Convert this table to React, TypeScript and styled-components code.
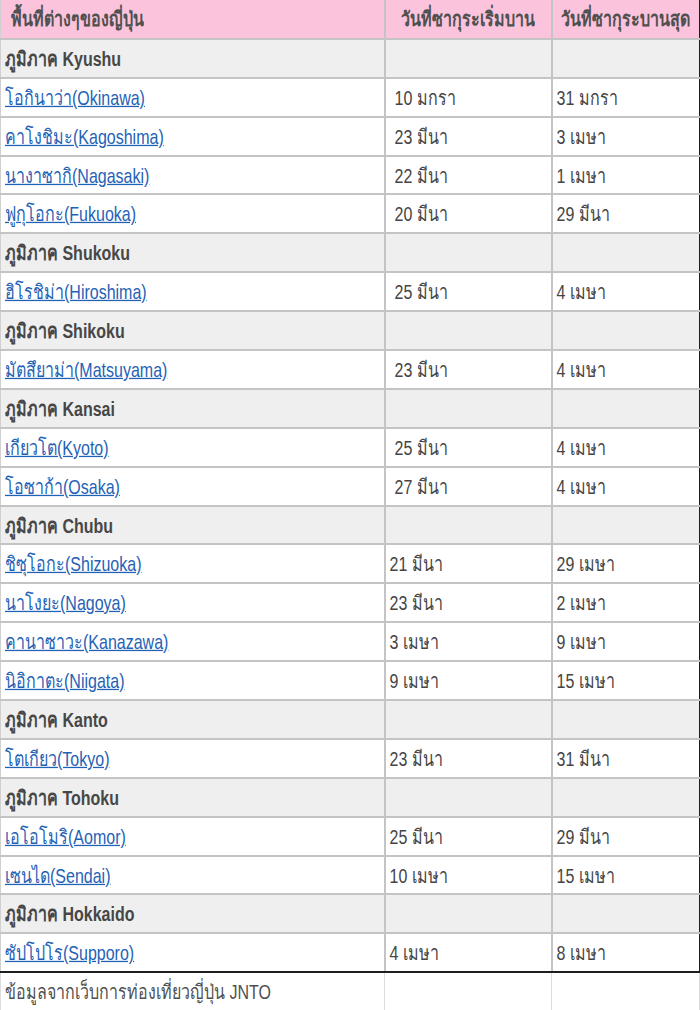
import React from "react";
import styled, { createGlobalStyle } from "styled-components";

type Place = { name: string; start: string; end: string; pad?: boolean };
type Region = { title: string; places: Place[] };

const regions: Region[] = [
  {
    title: "ภูมิภาค Kyushu",
    places: [
      { name: "โอกินาว่า(Okinawa)", start: "10 มกรา", end: "31 มกรา", pad: true },
      { name: "คาโงชิมะ(Kagoshima)", start: "23 มีนา", end: "3 เมษา", pad: true },
      { name: "นางาซากิ(Nagasaki)", start: "22 มีนา", end: "1 เมษา", pad: true },
      { name: "ฟูกุโอกะ(Fukuoka)", start: "20 มีนา", end: "29 มีนา", pad: true },
    ],
  },
  {
    title: "ภูมิภาค Shukoku",
    places: [{ name: "ฮิโรชิม่า(Hiroshima)", start: "25 มีนา", end: "4 เมษา", pad: true }],
  },
  {
    title: "ภูมิภาค Shikoku",
    places: [{ name: "มัตสึยาม่า(Matsuyama)", start: "23 มีนา", end: "4 เมษา", pad: true }],
  },
  {
    title: "ภูมิภาค Kansai",
    places: [
      { name: "เกียวโต(Kyoto)", start: "25 มีนา", end: "4 เมษา", pad: true },
      { name: "โอซาก้า(Osaka)", start: "27 มีนา", end: "4 เมษา", pad: true },
    ],
  },
  {
    title: "ภูมิภาค Chubu",
    places: [
      { name: "ชิซุโอกะ(Shizuoka)", start: "21 มีนา", end: "29 เมษา" },
      { name: "นาโงยะ(Nagoya)", start: "23 มีนา", end: "2 เมษา" },
      { name: "คานาซาวะ(Kanazawa)", start: "3 เมษา", end: "9 เมษา" },
      { name: "นิอิกาตะ(Niigata)", start: "9 เมษา", end: "15 เมษา" },
    ],
  },
  {
    title: "ภูมิภาค Kanto",
    places: [{ name: "โตเกียว(Tokyo)", start: "23 มีนา", end: "31 มีนา" }],
  },
  {
    title: "ภูมิภาค Tohoku",
    places: [
      { name: "เอโอโมริ(Aomor)", start: "25 มีนา", end: "29 มีนา" },
      { name: "เซนได(Sendai)", start: "10 เมษา", end: "15 เมษา" },
    ],
  },
  {
    title: "ภูมิภาค Hokkaido",
    places: [{ name: "ซัปโปโร(Supporo)", start: "4 เมษา", end: "8 เมษา" }],
  },
];

const GlobalStyle = createGlobalStyle`
  body {
    margin: 0;
    background: #ffffff;
    font-family: "Liberation Sans", "DejaVu Sans", sans-serif;
  }
`;

const Page = styled.div`
  width: 700px;
  height: 1010px;
  overflow: hidden;
`;

const Table = styled.table`
  width: 699px;
  border-collapse: collapse;
  table-layout: fixed;
  font-size: 16px;
  color: #454545;
`;

const Body = styled.tbody`
  tr > *:last-child {
    border-right-color: #1e1e1e;
  }
  tr:last-child > * {
    border-bottom-color: #1e1e1e;
  }
`;

const Row = styled.tr<{ $tone?: "head" | "region" | "plain" }>`
  height: 38.9px;
  background: ${(p) =>
    p.$tone === "head" ? "#fbc4dc" : p.$tone === "region" ? "#efefef" : "#ffffff"};
`;

const Cell = styled.td<{ $pad?: number }>`
  border: 2px solid #c4c4c4;
  padding: 0 0 0 ${(p) => p.$pad ?? 4}px;
  white-space: nowrap;
  vertical-align: middle;
  text-align: left;
  &:first-child {
    border-left: 1px solid #d0d0d0;
  }
`;

const HeadCell = styled(Cell)`
  border-top: none;
  font-size: 16px;
  font-weight: bold;
  color: #505050;
`;

const RegionCell = styled(Cell)`
  font-weight: bold;
  color: #474747;
`;

// the source text is drawn taller than it is wide
const Tall = styled.span`
  display: inline-block;
  transform: scaleY(1.28);
  transform-origin: center;
`;

const PlaceLink = styled.a`
  display: inline-block;
  transform: scaleY(1.28);
  transform-origin: center;
  color: #1f62b6;
  text-decoration: underline;
`;

const Note = styled.tr`
  height: 38px;
  td {
    border: 1px solid #dcdcdc;
    border-top: none;
    padding-left: 4px;
    color: #505050;
    font-size: 16px;
  }
`;

export default function App() {
  return (
    <Page>
      <GlobalStyle />
      <Table>
        <colgroup>
          <col style={{ width: 384 }} />
          <col style={{ width: 167 }} />
          <col style={{ width: 148 }} />
        </colgroup>
        <Body>
          <Row $tone="head">
            <HeadCell as="th" $pad={10}>
              <Tall>พื้นที่ต่างๆของญี่ปุ่น</Tall>
            </HeadCell>
            <HeadCell as="th" $pad={15}>
              <Tall>วันที่ซากุระเริ่มบาน</Tall>
            </HeadCell>
            <HeadCell as="th" $pad={8}>
              <Tall>วันที่ซากุระบานสุด</Tall>
            </HeadCell>
          </Row>
          {regions.map((r) => (
            <React.Fragment key={r.title}>
              <Row $tone="region">
                <RegionCell>
                  <Tall>{r.title}</Tall>
                </RegionCell>
                <Cell />
                <Cell />
              </Row>
              {r.places.map((p) => (
                <Row key={p.name}>
                  <Cell>
                    <PlaceLink href="#">{p.name}</PlaceLink>
                  </Cell>
                  <Cell $pad={p.pad ? 9 : 4}>
                    <Tall>{p.start}</Tall>
                  </Cell>
                  <Cell>
                    <Tall>{p.end}</Tall>
                  </Cell>
                </Row>
              ))}
            </React.Fragment>
          ))}
        </Body>
        <tbody>
          <Note>
            <td>
              <Tall>ข้อมูลจากเว็บการท่องเที่ยวญี่ปุ่น JNTO</Tall>
            </td>
            <td />
            <td />
          </Note>
        </tbody>
      </Table>
    </Page>
  );
}
